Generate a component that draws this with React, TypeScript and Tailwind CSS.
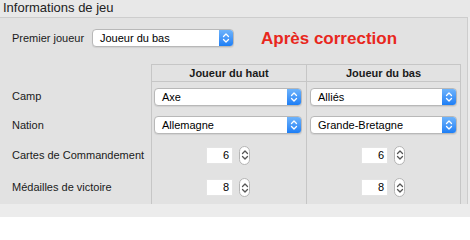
import React from "react";

const font = { fontFamily: '"Liberation Sans", Arial, sans-serif' };

function Chevrons({ color = "white" }: { color?: string }) {
  return (
    <svg width="8" height="12" viewBox="0 0 8 12" fill="none">
      <path d="M1.5 4.5 L4 2 L6.5 4.5" stroke={color} strokeWidth="1.3" strokeLinecap="round" strokeLinejoin="round" />
      <path d="M1.5 7.5 L4 10 L6.5 7.5" stroke={color} strokeWidth="1.3" strokeLinecap="round" strokeLinejoin="round" />
    </svg>
  );
}

function Select({ value, className = "" }: { value: string; className?: string }) {
  return (
    <div
      className={`flex h-[18px] items-stretch rounded-[4px] border border-[#b8b8b8] bg-white shadow-[0_1px_1px_rgba(0,0,0,0.08)] overflow-hidden ${className}`}
    >
      <div className="flex-1 pl-[7px] text-[11px] leading-[16px] text-black">{value}</div>
      <div className="flex w-[14px] items-center justify-center bg-gradient-to-b from-[#6db3fb] to-[#1b7ef5]">
        <Chevrons />
      </div>
    </div>
  );
}

function Stepper({ value }: { value: string }) {
  return (
    <div className="flex items-center gap-[6px]">
      <div className="h-[17px] w-[27px] bg-white pr-[4px] text-right text-[11px] leading-[17px] text-black shadow-[inset_0_0_0_1px_#e4e4e4]">
        {value}
      </div>
      <div className="flex h-[19px] w-[11px] items-center justify-center rounded-full border border-[#b5b5b5] bg-white">
        <Chevrons color="#555" />
      </div>
    </div>
  );
}

export default function App() {
  const cell = "flex items-center border-l border-[#c6c6c6]";
  const rows: { label: string; h: string; a: React.ReactNode; b: React.ReactNode }[] = [
    { label: "Camp", h: "h-[29px]", a: <Select value="Axe" className="ml-[2px] mr-[4px] flex-1" />, b: <Select value="Alliés" className="ml-[3px] mr-[3px] flex-1" /> },
    { label: "Nation", h: "h-[28px]", a: <Select value="Allemagne" className="ml-[2px] mr-[4px] flex-1" />, b: <Select value="Grande-Bretagne" className="ml-[3px] mr-[3px] flex-1" /> },
  ];
  return (
    <div className="flex h-[217px] w-[470px] flex-col bg-[#ececec] text-[#1a1a1a]" style={font}>
      <div className="h-[17px] bg-[#e8e8e8] pl-[3px] text-[13px] leading-[16px] text-[#222]">Informations de jeu</div>
      <div className="mr-[2px] flex h-[187px] flex-col border-t border-r border-[#cdcdcd] bg-[#e2e2e2]">
        <div className="flex h-[47px] items-start pt-[11px]">
          <div className="w-[92px] shrink-0 whitespace-nowrap pl-[12px] pt-[2px] text-[11px] leading-[14px]">Premier joueur</div>
          <Select value="Joueur du bas" className="w-[142px] shrink-0" />
          <div className="ml-[27px] whitespace-nowrap text-[17px] font-bold leading-[20px] text-[#e8271d]">Après correction</div>
        </div>
        <div className="grid grid-cols-[151px_155px_155px]">
          <div className="h-[18px]" />
          <div className="flex h-[18px] items-center justify-center border-l border-t border-b border-[#c6c6c6] text-[11px] font-bold">
            Joueur du haut
          </div>
          <div className="flex h-[18px] items-center justify-center border-l border-r border-t border-b border-[#c6c6c6] text-[11px] font-bold">
            Joueur du bas
          </div>
          {rows.map((r) => (
            <React.Fragment key={r.label}>
              <div className={`${r.h} flex items-center pl-[12px] text-[11px]`}>{r.label}</div>
              <div className={`${r.h} ${cell}`}>{r.a}</div>
              <div className={`${r.h} ${cell} border-r`}>{r.b}</div>
            </React.Fragment>
          ))}
          {[
            { label: "Cartes de Commandement", h: "h-[32px]", v: "6" },
            { label: "Médailles de victoire", h: "h-[33px]", v: "8" },
          ].map((r) => (
            <React.Fragment key={r.label}>
              <div className={`${r.h} flex items-center pl-[12px] text-[11px]`}>{r.label}</div>
              <div className={`${r.h} ${cell} justify-end pr-[56px]`}>
                <Stepper value={r.v} />
              </div>
              <div className={`${r.h} ${cell} border-r justify-end pr-[55px]`}>
                <Stepper value={r.v} />
              </div>
            </React.Fragment>
          ))}
        </div>
      </div>
    </div>
  );
}
